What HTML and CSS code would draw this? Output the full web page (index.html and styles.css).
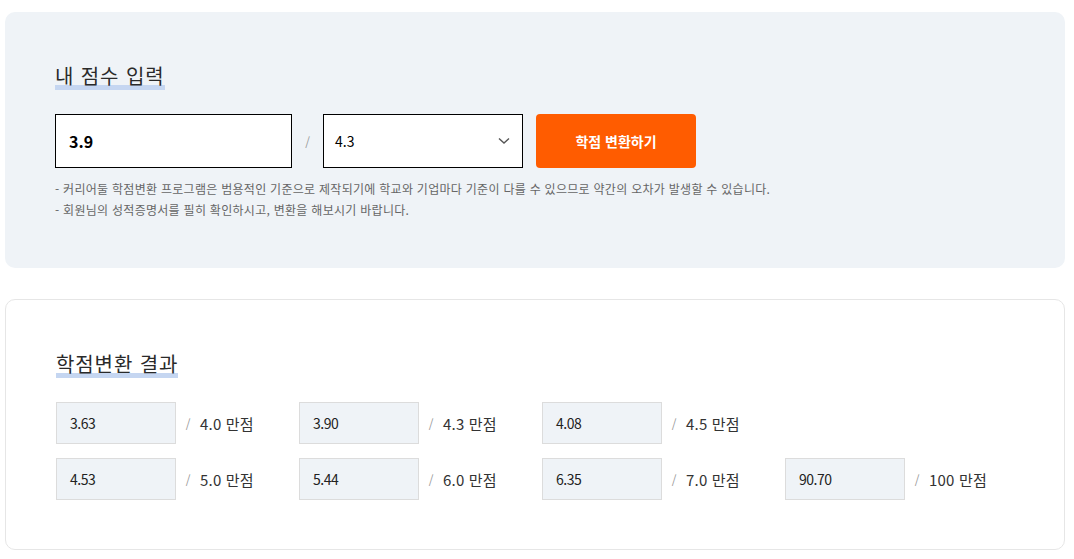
FILE: index.html
```html
<!DOCTYPE html>
<html lang="ko">
<head>
<meta charset="utf-8">
<title>학점변환</title>
<link rel="stylesheet" href="styles.css">
</head>
<body>
<div class="page">
  <section class="panel panel-input">
    <h2 class="title"><span class="title-text">내 점수 입력</span></h2>
    <div class="form-row">
      <div class="score-input">3.9</div>
      <span class="slash">/</span>
      <div class="score-select">
        <span>4.3</span>
        <svg class="chevron" width="12" height="8" viewBox="0 0 12 8"><path d="M1 1.5 L6 6 L11 1.5" fill="none" stroke="#555" stroke-width="1.4"/></svg>
      </div>
      <button class="convert-btn">학점 변환하기</button>
    </div>
    <ul class="notes">
      <li>- 커리어둘 학점변환 프로그램은 범용적인 기준으로 제작되기에 학교와 기업마다 기준이 다를 수 있으므로 약간의 오차가 발생할 수 있습니다.</li>
      <li>- 회원님의 성적증명서를 필히 확인하시고, 변환을 해보시기 바랍니다.</li>
    </ul>
  </section>

  <section class="panel panel-result">
    <h2 class="title"><span class="title-text">학점변환 결과</span></h2>
    <div class="result-grid">
      <div class="result-item"><div class="result-box">3.63</div><span class="slash">/</span><span class="result-label">4.0 만점</span></div>
      <div class="result-item"><div class="result-box">3.90</div><span class="slash">/</span><span class="result-label">4.3 만점</span></div>
      <div class="result-item"><div class="result-box">4.08</div><span class="slash">/</span><span class="result-label">4.5 만점</span></div>
      <div class="result-item empty"></div>
      <div class="result-item"><div class="result-box">4.53</div><span class="slash">/</span><span class="result-label">5.0 만점</span></div>
      <div class="result-item"><div class="result-box">5.44</div><span class="slash">/</span><span class="result-label">6.0 만점</span></div>
      <div class="result-item"><div class="result-box">6.35</div><span class="slash">/</span><span class="result-label">7.0 만점</span></div>
      <div class="result-item"><div class="result-box">90.70</div><span class="slash">/</span><span class="result-label">100 만점</span></div>
    </div>
  </section>
</div>
</body>
</html>
```
FILE: styles.css
```css
* { box-sizing: border-box; }
html, body {
  margin: 0;
  padding: 0;
  background: #fff;
}
body {
  font-family: "Noto Sans CJK KR", "Noto Sans", "Liberation Sans", sans-serif;
  color: #222;
}
.page {
  padding: 12px 9px 0 5px;
  display: flex;
  flex-direction: column;
  gap: 31px;
}
.panel {
  border-radius: 10px;
  width: 1060px;
}
.panel-input {
  background: #eff3f7;
  height: 256px;
  padding: 51px 50px 0 50px;
}
.panel-result {
  background: #fff;
  border: 1px solid #e6e6e6;
  height: 251px;
  padding: 51px 50px 0 50px;
}
.title {
  margin: 0;
  font-size: 20px;
  font-weight: 400;
  line-height: 26px;
  height: 26px;
  color: #2a2a2a;
}
.title-text {
  display: inline-block;
  height: 26px;
  line-height: 24px;
  background: linear-gradient(to bottom, transparent 21px, #c5d6f1 21px);
  letter-spacing: 0.9px;
}
.form-row {
  display: flex;
  align-items: center;
  margin-top: 25px;
  height: 54px;
}
.score-input {
  width: 237px;
  height: 54px;
  background: #fff;
  border: 1px solid #000;
  padding-left: 13px;
  display: flex;
  align-items: center;
  font-size: 16px;
  font-weight: 700;
  color: #000;
}
.slash {
  color: #999;
  font-size: 12px;
  width: 31px;
  text-align: center;
}
.score-select {
  width: 200px;
  height: 54px;
  background: #fff;
  border: 1px solid #000;
  padding: 0 12px 0 11px;
  display: flex;
  align-items: center;
  justify-content: space-between;
  font-size: 14px;
  color: #000;
}
.chevron { display: block; }
.convert-btn {
  margin-left: 13px;
  width: 160px;
  height: 54px;
  border: 0;
  border-radius: 4px;
  background: #ff5c00;
  color: #fff;
  font-family: inherit;
  font-size: 14px;
  font-weight: 700;
  padding: 0;
}
.notes {
  list-style: none;
  margin: 10px 0 0 0;
  padding: 0;
  font-size: 12px;
  line-height: 21px;
  letter-spacing: 0.28px;
  color: #666;
}
.result-grid {
  margin-top: 25px;
  display: grid;
  grid-template-columns: repeat(4, 243px);
  row-gap: 14px;
}
.result-item {
  display: flex;
  align-items: center;
  height: 42px;
}
.result-box {
  width: 120px;
  height: 42px;
  background: #eff3f7;
  border: 1px solid #dcdcdc;
  padding-left: 13px;
  display: flex;
  align-items: center;
  font-size: 14px;
  color: #222;
  letter-spacing: -0.5px;
}
.result-item .slash {
  width: 24px;
  font-size: 12px;
}
.result-label {
  font-size: 15px;
  color: #333;
  letter-spacing: 0.2px;
}
```
